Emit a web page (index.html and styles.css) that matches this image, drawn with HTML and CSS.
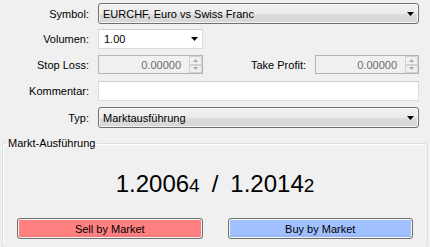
FILE: index.html
```html
<!DOCTYPE html>
<html lang="de">
<head>
<meta charset="utf-8">
<title>Order</title>
<link rel="stylesheet" href="styles.css">
</head>
<body>
<div class="form">
  <div class="row row-symbol">
    <span class="lbl">Symbol:</span>
    <div class="combo grow">
      <span class="combo-text">EURCHF, Euro vs Swiss Franc</span>
      <svg class="arrow" width="7" height="4" viewBox="0 0 7 4"><path d="M0 0H7L3.5 4Z"/></svg>
    </div>
  </div>
  <div class="row row-volume">
    <span class="lbl">Volumen:</span>
    <div class="edit-combo">
      <span class="edit-text">1.00</span>
      <svg class="arrow" width="7" height="4" viewBox="0 0 7 4"><path d="M0 0H7L3.5 4Z"/></svg>
    </div>
  </div>
  <div class="row row-sltp">
    <span class="lbl">Stop Loss:</span>
    <div class="spin">
      <span class="spin-val">0.00000</span>
      <span class="spin-btns">
        <span class="spin-btn"><svg width="5" height="3" viewBox="0 0 5 3"><path d="M2.5 0L5 3H0Z"/></svg></span>
        <span class="spin-btn"><svg width="5" height="3" viewBox="0 0 5 3"><path d="M0 0H5L2.5 3Z"/></svg></span>
      </span>
    </div>
    <span class="lbl lbl-tp">Take Profit:</span>
    <div class="spin spin-tp">
      <span class="spin-val">0.00000</span>
      <span class="spin-btns">
        <span class="spin-btn"><svg width="5" height="3" viewBox="0 0 5 3"><path d="M2.5 0L5 3H0Z"/></svg></span>
        <span class="spin-btn"><svg width="5" height="3" viewBox="0 0 5 3"><path d="M0 0H5L2.5 3Z"/></svg></span>
      </span>
    </div>
  </div>
  <div class="row row-comment">
    <span class="lbl">Kommentar:</span>
    <div class="textbox grow"></div>
  </div>
  <div class="row row-type">
    <span class="lbl">Typ:</span>
    <div class="combo grow">
      <span class="combo-text">Marktausführung</span>
      <svg class="arrow" width="7" height="4" viewBox="0 0 7 4"><path d="M0 0H7L3.5 4Z"/></svg>
    </div>
  </div>
</div>
<fieldset class="group">
  <legend class="group-title">Markt-Ausführung</legend>
  <div class="price">1.2006<span class="small">4</span><span class="sep">/</span>1.2014<span class="small">2</span></div>
  <div class="buttons">
    <div class="btn btn-sell">Sell by Market</div>
    <div class="btn btn-buy">Buy by Market</div>
  </div>
</fieldset>
</body>
</html>
```
FILE: styles.css
```css
html, body {
  margin: 0;
  padding: 0;
  height: 247px;
  overflow: hidden;
  background: #f0f0f0;
  font-family: "Liberation Sans", Arial, sans-serif;
  font-size: 11px;
  color: #000;
}

.form {
  padding-top: 3px;
  padding-right: 11px;
  display: flex;
  flex-direction: column;
}

.row {
  display: flex;
  align-items: stretch;
}
.row-symbol { height: 21px; }
.row-volume { height: 20px; margin-top: 5px; }
.row-sltp { height: 19px; margin-top: 6px; }
.row-comment { height: 20px; margin-top: 7px; }
.row-type { height: 21px; margin-top: 6px; }

.lbl {
  width: 89px;
  margin-right: 9px;
  text-align: right;
  display: flex;
  align-items: center;
  justify-content: flex-end;
  white-space: nowrap;
}
.lbl-tp {
  width: auto;
  flex: 1;
}

.grow { flex: 1; }

.combo {
  box-sizing: border-box;
  border: 1px solid #707070;
  border-radius: 3px;
  background: linear-gradient(to bottom, #f2f2f2 0%, #ebebeb 50%, #dddddd 51%, #d6d6d6 100%);
  box-shadow: inset 0 0 0 1px rgba(255, 255, 255, 0.7);
  display: flex;
  align-items: center;
  justify-content: space-between;
  padding: 0 4px 0 4px;
}

.arrow { fill: #000; display: block; }

.edit-combo {
  box-sizing: border-box;
  width: 105px;
  border: 1px solid #dcdcdc;
  border-top-color: #cfcfcf;
  background: #fff;
  display: flex;
  align-items: center;
  justify-content: space-between;
  padding: 0 4px 0 5px;
}

.spin {
  box-sizing: border-box;
  width: 105px;
  border: 1px solid #b3b3b3;
  background: #f0f0f0;
  display: flex;
  align-items: stretch;
}
.spin-tp { width: 104px; }
.spin-val {
  flex: 1;
  display: flex;
  align-items: center;
  justify-content: flex-end;
  padding-right: 8px;
  color: #6d6d6d;
}
.spin-btns {
  width: 13px;
  display: flex;
  flex-direction: column;
}
.spin-btn {
  flex: 1;
  box-sizing: border-box;
  border: 1px solid #d2d2d2;
  background: #f0f0f0;
  display: flex;
  align-items: center;
  justify-content: center;
}
.spin-btn svg { fill: #a8a8a8; display: block; }

.textbox {
  box-sizing: border-box;
  border: 1px solid #dcdcdc;
  border-top-color: #cfcfcf;
  background: #fff;
}

.group {
  margin: 8px 2px 0 2px;
  padding: 0 0 8px 0;
  border: 1px solid #d5dfe5;
  border-radius: 3px;
  box-shadow: inset 1px 1px 0 #fff;
  min-width: 0;
}
.group-title {
  margin-left: 3px;
  padding: 0 2px;
  line-height: 14px;
}

.price {
  margin-top: 19px;
  font-size: 24px;
  line-height: 30px;
  text-align: center;
  white-space: nowrap;
}
.small {
  font-size: 19px;
  line-height: 1;
}
.sep {
  margin: 0 12px;
}

.buttons {
  margin-top: 19px;
  padding: 0 14px;
  display: flex;
  gap: 25px;
}
.btn {
  flex: 1;
  box-sizing: border-box;
  height: 21px;
  border: 1px solid #707070;
  border-radius: 3px;
  box-shadow: inset 0 0 0 1px #f4f4f4, inset 0 -3px 0 rgba(0, 0, 0, 0.04);
  display: flex;
  align-items: center;
  justify-content: center;
}
.btn-sell { background: #ff8080; }
.btn-buy { background: #a0c0ff; }
```
